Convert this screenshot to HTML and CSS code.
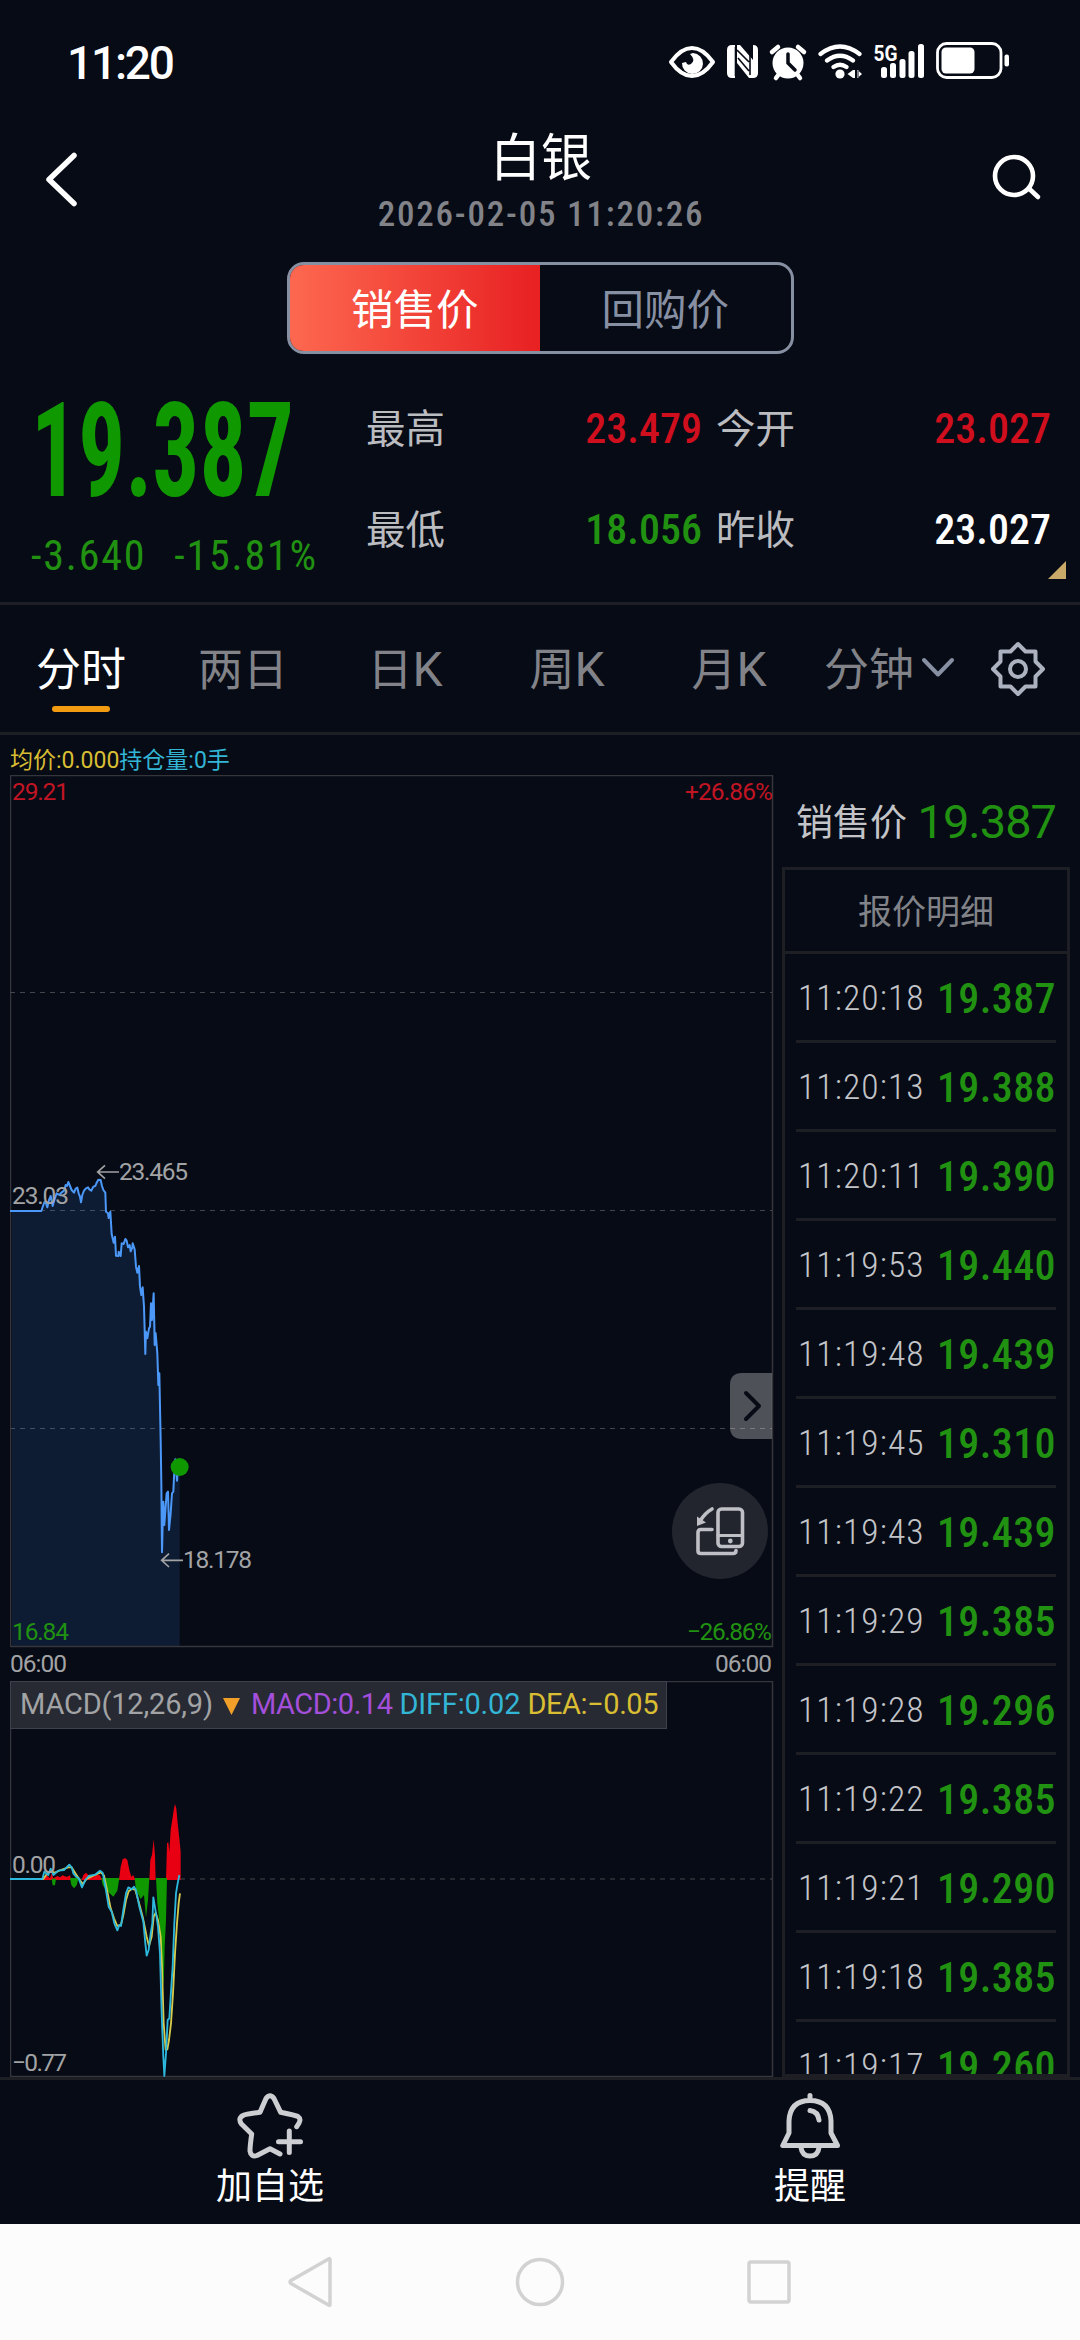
FILE: index.html
```html
<!DOCTYPE html>
<html lang="zh-CN">
<head>
<meta charset="utf-8">
<title>白银</title>
<link rel="stylesheet" href="styles.css">
</head>
<body>
<div class="app">
  <div class="status">
    <span class="clock">11:20</span>
    <svg class="status-icons" width="344" height="44" viewBox="0 0 344 44">
      <g transform="translate(-668 -38)" fill="#fff">
        <path d="M671 62q10-14 21-14t21 14q-10 14-21 14t-21-14z" fill="none" stroke="#fff" stroke-width="4" stroke-linejoin="round"/>
        <path d="M693 53a10.500 10.500 0 1 1-11 10l4-1q1 4 5 2q5-4-1-10z"/>
        <path d="M732 45h2l1 0v33h-3q-5 0-5-5v-23q0-5 5-5zM737 45h3l13 15v-15q5 0 5 5v23q0 5-5 5h-4l-12-15z"/>
        <path d="M735.500 47v29M750 46v29M737 50l12 12M738 58l11 13" stroke="#070b15" stroke-width="1.600"/>
        <circle cx="788" cy="63" r="15.500"/>
        <path d="M772 52l6-5M804 52l-6-5M776 78l3-4M800 78l-3-4" stroke="#fff" stroke-width="4.500" stroke-linecap="round"/>
        <path d="M788 54v9l7 7" fill="none" stroke="#070b15" stroke-width="3.500" stroke-linecap="round"/>
        <path d="M820.500 54q19.500-15 39 0M827 60.500q13-9.500 26 0M833.500 67q6.500-4.500 13 0" fill="none" stroke="#fff" stroke-width="4.200" stroke-linecap="round"/>
        <circle cx="840" cy="74" r="4.600"/>
        <path d="M847.500 74L853 70V78ZM853 70h2v8h-2zM857 70h1.500v8h-1.500zM862 74L857.500 70V78Z"/>
        <text x="873.500" y="60.500" font-size="22" font-weight="700" textLength="24" lengthAdjust="spacingAndGlyphs">5G</text>
        <rect x="881" y="67" width="6" height="11" rx="2.500"/><rect x="890" y="63" width="6" height="15" rx="2.500"/><rect x="899.500" y="59" width="6" height="19" rx="2.500"/><rect x="908.500" y="51" width="6" height="27" rx="2.500"/><rect x="918" y="44" width="6" height="34" rx="2.500"/>
        <rect x="937.500" y="43.500" width="63.500" height="34" rx="9" fill="none" stroke="#fff" stroke-width="2.800"/>
        <rect x="941.500" y="47.500" width="33" height="26" rx="4.500"/>
        <rect x="1004.500" y="54.500" width="4.500" height="12" rx="2"/>
      </g>
    </svg>
  </div>

  <header class="header">
    <svg class="back" width="40" height="60" viewBox="0 0 40 60"><path d="M31 5.500L6 29.500L31 53.500" fill="none" stroke="#fff" stroke-width="5.500" stroke-linecap="round" stroke-linejoin="round"/></svg>
    <div class="heading">
      <h1>白银</h1>
      <div class="date num">2026-02-05 11:20:26</div>
    </div>
    <svg class="search" width="52" height="52" viewBox="0 0 52 52"><g fill="none" stroke="#fff" stroke-width="4.600" stroke-linecap="round"><circle cx="24" cy="25" r="19"/><path d="M40 38.500l8 7.500"/></g></svg>
  </header>

  <div class="switch"><div class="seg on">销售价</div><div class="seg">回购价</div></div>

  <section class="quote">
    <div class="last">
      <div class="price num">19.387</div>
      <div class="delta num"><span>-3.640</span><span>-15.81%</span></div>
    </div>
    <dl class="stats">
      <div><dt>最高</dt><dd class="num up">23.479</dd></div>
      <div><dt>今开</dt><dd class="num up">23.027</dd></div>
      <div><dt>最低</dt><dd class="num down">18.056</dd></div>
      <div><dt>昨收</dt><dd class="num">23.027</dd></div>
    </dl>
    <i class="corner"></i>
  </section>

  <nav class="tabs">
    <span class="tab active">分时</span><span class="tab">两日</span><span class="tab">日<b class="num">K</b></span><span class="tab">周<b class="num">K</b></span><span class="tab">月<b class="num">K</b></span>
    <span class="minutes">分钟<svg width="36" height="24" viewBox="0 0 36 24"><path d="M4 4L18 18.500L32 4" fill="none" stroke="#8790a3" stroke-width="4" stroke-linecap="round" stroke-linejoin="round"/></svg></span>
    <svg class="gear" width="58" height="58" viewBox="-29 -29 58 58"><g fill="none" stroke="#adb2c0" stroke-width="4" stroke-linejoin="round"><path d="M0-25L7.500-17.500H17.500V-7.500L25 0L17.500 7.500V17.500H7.500L0 25L-7.500 17.500H-17.500V7.500L-25 0L-17.500-7.500V-17.500H-7.500Z"/><circle r="8"/></g></svg>
  </nav>

  <main class="board">
    <div class="charts">
      <div class="legend"><span class="avg">均价:0.000</span><span class="hold">持仓量:0手</span></div>
      <div class="plot">
        <svg width="764" height="906" viewBox="0 0 764 906">
          <path d="M0.500 0V871.500H762.500V0.500H0" fill="none" stroke="#34363c" stroke-width="1.500"/>
          <path d="M0 217.500H762M0 435.500H762M0 653.500H762" stroke="#43464b" stroke-width="1.200" stroke-dasharray="5 5"/>
          <g transform="translate(-10 365) scale(.33333)">
            <path fill="#3c90ff" fill-opacity=".13" d="M36 1517V213H124L130 195L142 195L152 168L158 190L170 160L192 152L205 126L222 158L232 143L243 187L258 145L274 152L295 119L302 120L316 158L318 215L331 225L341 308L348 347L362 348L365 310L376 297L392 334L398 310L404 328L412 398L417 378L424 465L428 442L436 642L450 560L461 460L472 640L478 700L482 900L486 1237L493 1155L504 1055L507 1170L520 1055L526 958L539 980V1517Z"/>
            <polyline fill="none" stroke="#4c98f8" stroke-width="6" stroke-linejoin="round" points="30,213 124,213 130,195 134,185 138,190 142,202 147,180 152,168 158,198 163,180 170,160 178,165 184,158 192,152 197,135 201,138 205,126 210,138 215,150 222,158 227,146 232,143 236,160 240,170 243,187 247,165 252,152 258,145 264,142 268,148 274,152 280,140 286,138 290,128 295,119 302,120 306,138 310,150 316,158 318,215 324,220 326,234 331,215 335,282 341,308 345,290 348,347 355,348 356,335 362,348 365,310 371,312 376,297 380,302 384,322 389,315 392,334 397,322 398,310 404,328 408,380 412,398 417,378 420,440 424,465 428,442 432,500 436,642 438,575 442,595 447,565 450,560 453,490 456,540 461,460 464,615 467,580 472,640 475,735 478,700 482,900 484,1030 486,1237 490,1085 493,1155 497,1100 500,1060 504,1055 507,1170 512,1120 516,1060 520,1055 523,990 526,958 531,1022 534,980 539,980"/>
            <circle cx="539" cy="981" r="27" fill="#0f9800"/>
            <path d="M357 96H293M315 76L293 96L315 116M549 1261H485M507 1241L485 1261L507 1281" fill="none" stroke="#a2a3a5" stroke-width="5"/>
          </g>
          <g class="axis">
            <text class="up" x="2" y="25" textLength="57">29.21</text>
            <text class="up" x="675" y="25" textLength="88">+26.86%</text>
            <text x="2" y="429" textLength="57">23.03</text>
            <text x="109" y="405" textLength="69">23.465</text>
            <text x="173" y="793" textLength="69">18.178</text>
            <text class="down" x="2" y="865" textLength="57">16.84</text>
            <text class="down" x="677" y="865" textLength="85">−26.86%</text>
            <text x="0" y="897" textLength="57">06:00</text>
            <text x="705" y="897" textLength="57">06:00</text>
          </g>
        </svg>
        <svg class="fold" width="42" height="66" viewBox="0 0 42 66"><path d="M42 0H12Q0 0 0 12V54Q0 66 12 66H42Z" fill="#fff" fill-opacity=".29"/><path d="M16 20L29 33L16 46" fill="none" stroke="#070b15" stroke-width="4" stroke-linecap="round" stroke-linejoin="round"/></svg>
        <svg class="rotate" width="96" height="96" viewBox="0 0 96 96"><circle cx="48" cy="48" r="48" fill="#22252e"/><g fill="none" stroke="#bfc0c5" stroke-width="3.600" stroke-linecap="round" stroke-linejoin="round"><rect x="46" y="26" width="24.500" height="37.500" rx="3.500"/><path d="M46 52.500H70" stroke-width="3"/><path d="M40 46.500H29Q26 46.500 26 49.500V68Q26 70.500 29 70.500H61Q64 70.500 64 67.500"/><path d="M40 26Q33 30 28 38"/></g><path d="M25 33.500V43L34 39.500Z" fill="#bfc0c5"/><circle cx="58.300" cy="58" r="2.400" fill="#bfc0c5"/></svg>
      </div>
      <div class="macd">
        <div class="macd-key">
          <svg width="658" height="49" viewBox="0 0 658 49">
            <rect x=".5" y=".5" width="656" height="47" fill="#272a32" stroke="#3f424a"/>
            <g class="key">
              <text x="10" y="32.500" fill="#a2a3a5" textLength="193">MACD(12,26,9)</text>
              <path d="M213 17H230L221.500 34Z" fill="#f0a028"/>
              <text x="241" y="32.500" fill="#a44fdb" textLength="142">MACD:0.14</text>
              <text x="389.500" y="32.500" fill="#33b5d6" textLength="121">DIFF:0.02</text>
              <text x="517.500" y="32.500" fill="#d9bd33" textLength="131">DEA:−0.05</text>
            </g>
          </svg>
        </div>
        <svg width="764" height="396" viewBox="0 0 764 396">
          <path d="M0.500 0V395.500H762.500V0.500H0" fill="none" stroke="#34363c" stroke-width="1.500"/>
          <path d="M0 198H762" stroke="#43464b" stroke-width="1.200" stroke-dasharray="5 5"/>
          <g transform="translate(-10 99) scale(.33333)">
            <path fill="#e80012" d="M128 300L140 285L150 295L155 280L160 295L172 288L180 292L188 286L200 291L210 286L214 300ZM245 300L250 285L258 278L266 286L275 290L290 284L300 286L306 300ZM357 300L362 260L368 238L375 234L382 240L388 270L394 290L400 285L406 300ZM448 300L451 240L456 225L461 178L465 225L467 300ZM498 300L501 190L505 187L508 215L512 150L517 118L522 85L525 72L529 85L533 130L538 175L542 215V300Z"/>
            <path fill="#0f9800" d="M155 296L158 316L165 316L168 296ZM210 294L214 315L222 325L230 316L236 294ZM304 294L308 315L318 330L340 350L352 332L358 294ZM404 294L408 330L422 357L432 345L438 413L444 360L448 294ZM468 294L472 370L480 440L486 560L491 620L494 500L498 420L501 294Z"/>
            <g fill="none" stroke-width="5.500" stroke-linejoin="round">
              <polyline stroke="#d6ca4c" points="28,297 130,297 140,283 152,274 165,278 182,270 205,262 215,262 225,278 238,298 248,312 260,297 278,288 302,277 312,286 320,325 332,385 342,415 352,438 363,434 370,405 378,360 386,334 396,326 406,330 416,365 428,410 440,470 447,498 455,470 461,410 467,398 474,420 482,470 486,560 491,730 497,810 502,808 507,780 513,730 519,640 525,520 531,430 536,370 540,340"/>
              <polyline stroke="#2db9dd" points="28,297 127,297 133,275 145,285 152,266 160,285 175,272 192,270 208,254 215,262 220,280 228,290 236,295 246,322 256,300 266,288 285,284 300,272 308,278 316,320 326,380 335,395 343,430 352,451 358,435 363,438 370,390 378,340 385,322 395,328 402,320 408,330 418,380 430,425 436,490 440,527 446,510 452,460 457,430 460,352 468,400 474,440 480,520 485,700 490,830 493,888 498,820 503,720 508,715 512,650 518,560 523,430 528,340 533,310 538,285"/>
            </g>
          </g>
          <g class="axis">
            <text x="2" y="192" textLength="44">0.00</text>
            <text x="2" y="390" textLength="55">−0.77</text>
          </g>
        </svg>
      </div>
    </div>

    <aside class="side">
      <div class="now"><span>销售价</span><span class="now-price down">19.387</span></div>
      <div class="ticks">
        <div class="ticks-title">报价明细</div>
        <ul>
          <li><time class="num">11:20:18</time><span class="num">19.387</span></li>
          <li><time class="num">11:20:13</time><span class="num">19.388</span></li>
          <li><time class="num">11:20:11</time><span class="num">19.390</span></li>
          <li><time class="num">11:19:53</time><span class="num">19.440</span></li>
          <li><time class="num">11:19:48</time><span class="num">19.439</span></li>
          <li><time class="num">11:19:45</time><span class="num">19.310</span></li>
          <li><time class="num">11:19:43</time><span class="num">19.439</span></li>
          <li><time class="num">11:19:29</time><span class="num">19.385</span></li>
          <li><time class="num">11:19:28</time><span class="num">19.296</span></li>
          <li><time class="num">11:19:22</time><span class="num">19.385</span></li>
          <li><time class="num">11:19:21</time><span class="num">19.290</span></li>
          <li><time class="num">11:19:18</time><span class="num">19.385</span></li>
          <li><time class="num">11:19:17</time><span class="num">19.260</span></li>
        </ul>
      </div>
    </aside>
  </main>

  <footer class="actions">
    <div class="action">
      <svg width="72" height="72" viewBox="0 0 72 72"><g fill="none" stroke="#cdced2" stroke-width="5" stroke-linecap="round" stroke-linejoin="round"><path d="M62.700 36.700Q68.500 29.500 64 26.500Q62 25.500 46.700 22.300L40 8.500Q36 3 32 8.500L26 22.300Q12 24 9 25.500Q3.500 28.500 7.500 34L17.700 44Q16 56 16 61Q17 67.500 23 65.500L36 58.700L46 64"/><path d="M44.500 51.700H66.500M55.300 41V62.500"/></g></svg>
      <span>加自选</span>
    </div>
    <div class="action">
      <svg width="72" height="72" viewBox="0 0 72 72"><g fill="none" stroke="#cdced2" stroke-width="5" stroke-linecap="round" stroke-linejoin="round"><path d="M36 5.500V9M8.800 55.500H63.500L57 43V31Q56 10.500 36 10.500Q16 10.500 15 31V43Z"/><path d="M27 57.500Q28 66 36 66Q44 66 45 57.500M36 20.500Q44 21.500 45 30"/></g></svg>
      <span>提醒</span>
    </div>
  </footer>

  <div class="sysnav">
    <svg width="52" height="56" viewBox="0 0 52 56"><path d="M45 5.500Q45 4 43.500 5L6 26.500Q4 28 6 29.500L43.500 51Q45 52 45 50.500Z"/></svg>
    <svg width="52" height="56" viewBox="0 0 52 56"><circle cx="26" cy="28" r="22.500"/></svg>
    <svg width="52" height="56" viewBox="0 0 52 56"><rect x="6" y="8" width="40" height="40" rx="2"/></svg>
  </div>
</div>
</body>
</html>
```
FILE: styles.css
```css
* { box-sizing: border-box; margin: 0; padding: 0; }
html, body { width: 1080px; height: 2340px; overflow: hidden; }
body { background: #070b15; color: #fff; font-family: "Noto Sans CJK SC", sans-serif; }
svg { display: block; flex: none; }
svg text { font-family: Roboto, "Noto Sans CJK SC", sans-serif; }
.app { height: 2340px; display: flex; flex-direction: column; }
.app > * { flex: none; }
.num { font-family: Roboto, sans-serif; font-stretch: 75%; white-space: nowrap; }
.up { color: #cf0e1e; fill: #c11524; }
.down { color: #219112; fill: #219112; }

.status { height: 120px; padding: 38px 68px 0 67px; display: flex; justify-content: space-between; }
.clock { font: 500 46px/50px Roboto, sans-serif; letter-spacing: -2.2px; }

.header { height: 142px; padding: 0 36px 0 43px; display: flex; justify-content: space-between; }
.back { margin-top: 30px; }
.search { margin: 31px 2px 0 0; }
.heading { text-align: center; margin-left: 9px; }
h1 { font-size: 51px; font-weight: 400; line-height: 69px; }
.date { font-size: 35px; line-height: 40px; font-weight: 500; color: #818388; letter-spacing: 1.8px; margin-top: 6px; }

.switch { width: 507px; height: 92px; margin: 0 auto; border: 3px solid #8790a3; border-radius: 17px; overflow: hidden; display: flex; }
.seg { flex: 1; text-align: center; font-size: 42.500px; line-height: 83px; color: #8790a3; }
.seg.on { color: #fff; background: linear-gradient(90deg, #fd6850, #e82022); }

.quote { height: 251px; border-bottom: 3px solid #1d1f24; display: flex; position: relative; }
.last { width: 364px; padding: 36px 0 0 31px; color: #219112; }
.price { width: 300px; font-size: 131px; line-height: 122px; font-weight: 700; color: #0f9800; transform: scaleX(.712); transform-origin: 0 0; }
.delta { font-size: 42px; line-height: 48px; display: flex; gap: 28px; margin-top: 20px; letter-spacing: 1.800px; }
.stats { flex: 1; padding-top: 24px; display: grid; grid-template-columns: 338px 337px; column-gap: 12px; grid-auto-rows: 101px; }
.stats div { display: flex; justify-content: space-between; height: 100px; line-height: 101px; }
.stats dt { font-size: 39.500px; color: #bbbcc0; margin-left: 2px; line-height: 95px; }
.stats dd { font-size: 42px; font-weight: 500; }
.corner { position: absolute; right: 14px; bottom: 23px; width: 18px; height: 18px; background: #c9aa68; clip-path: polygon(100% 0, 100% 100%, 0 100%); }

.tabs { height: 130px; border-bottom: 3px solid #1d1f24; display: flex; font-size: 45px; line-height: 123px; color: #818388; }
.tab { width: 162px; text-align: center; position: relative; }
.tab b { font-weight: 400; font-size: 48px; font-stretch: 100%; }
.active { color: #fff; }
.active::after { content: ""; position: absolute; left: 52px; top: 101px; width: 58px; height: 6px; border-radius: 3px; background: #f39c12; }
.minutes { width: 179px; padding-left: 14px; display: flex; align-items: flex-start; gap: 6px; }
.minutes svg { margin-top: 51px; }
.gear { margin-top: 35px; }

.board { height: 1342px; display: flex; overflow: hidden; }
.charts { width: 782px; padding-left: 10px; }
.legend { height: 40px; font-size: 23px; line-height: 51px; display: flex; font-family: Roboto, "Noto Sans CJK SC", sans-serif; }
.avg { color: #d9bd33; }
.hold { color: #33b5d6; }
.plot { position: relative; height: 906px; }
.fold { position: absolute; left: 720px; top: 598px; }
.rotate { position: absolute; left: 662px; top: 708px; }
.macd { position: relative; }
.macd-key { position: absolute; left: 0; top: 0; }
.axis { font-size: 24.500px; fill: #a2a3a5; }
.key { font-size: 29px; }

.side { width: 288px; }
.now { height: 132px; padding: 38px 14px 0 14px; display: flex; justify-content: space-between; align-items: center; font-size: 37px; color: #c3c4c8; line-height: 92px; }
.now-price { font-family: Roboto, sans-serif; font-size: 47px; letter-spacing: -1px; padding-top: 3px; }
.ticks { height: 1210px; border: 3px solid #1d1f24; overflow: hidden; }
.ticks-title { height: 84px; border-bottom: 3px solid #1d1f24; text-align: center; font-size: 34px; line-height: 79px; color: #818388; }
.ticks ul { list-style: none; padding: 0 11px; }
.ticks li { height: 89px; border-bottom: 3px solid #1d1f24; display: flex; justify-content: space-between; align-items: center; padding: 2px 0 0 2px; }
.ticks time { font-size: 35.500px; font-weight: 300; color: #c3c4c8; letter-spacing: 1.1px; }
.ticks li span { font-size: 42px; font-weight: 500; color: #219112; letter-spacing: .4px; }

.actions { height: 147px; border-top: 3px solid #1d1f24; display: flex; }
.action { flex: 1; display: flex; flex-direction: column; align-items: center; padding-top: 10px; font-size: 36px; line-height: 42px; }
.sysnav { height: 116px; background: #fcfcfc; display: flex; justify-content: center; gap: 177px; align-items: center; }
.sysnav svg { fill: none; stroke: #d2d2d2; stroke-width: 3.500; }
```
